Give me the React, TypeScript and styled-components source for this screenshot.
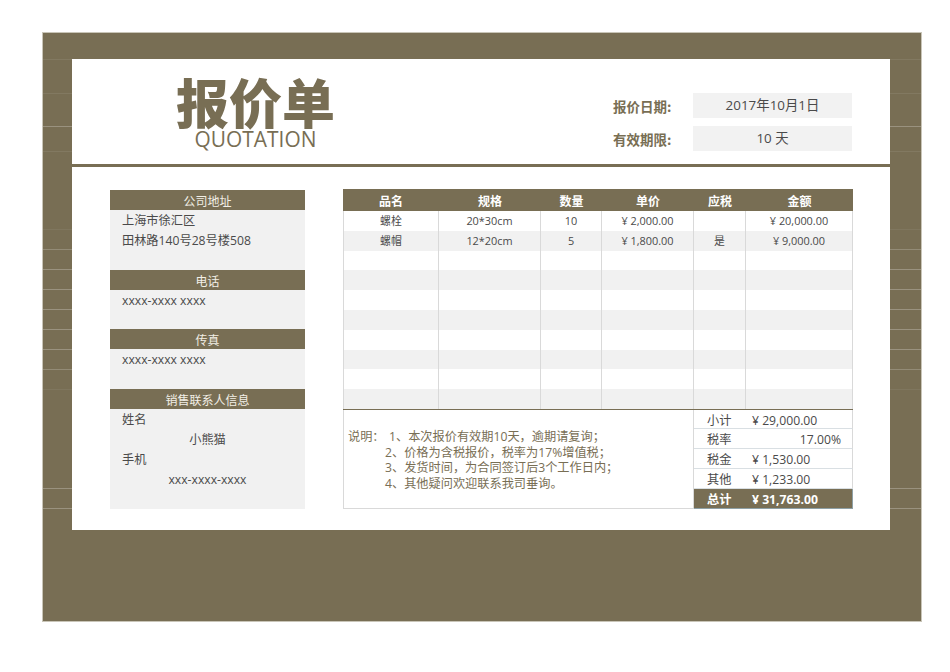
import React from "react";
import styled, { createGlobalStyle } from "styled-components";

const Global = createGlobalStyle`
  html, body { margin: 0; padding: 0; background: #fff; }
  body { font-family: "Open Sans", "Noto Sans CJK SC", sans-serif; color: #4a4a4a; }
`;

const BROWN = "#786e54";

const Page = styled.div`
  width: 950px; height: 672px; padding: 32px 0 0 42px; box-sizing: border-box;
`;
const Frame = styled.div`
  width: 880px; height: 590px; box-sizing: border-box; background: ${BROWN};
  border: 1px solid #c9c5b8;
  display: grid; grid-template-columns: 29px 818px 31px; grid-template-rows: 26px 471px 91px;
`;
const TopBand = styled.div`grid-column: 1 / 4;`;
const BottomBand = styled.div`grid-column: 1 / 4;`;
const Gutter = styled.div`display: flex; flex-direction: column;`;
const GutterCell = styled.div<{ $h: number; $o: number }>`
  height: ${p => p.$h}px; flex: none; box-sizing: border-box;
  border-top: 1px solid rgba(255, 255, 255, ${p => p.$o});
`;
const Sheet = styled.div`background: #fff; display: flex; flex-direction: column;`;

const Head = styled.header`
  height: 105px; flex: none; border-bottom: 3px solid ${BROWN}; box-sizing: content-box;
  display: flex; justify-content: space-between;
`;
const Brand = styled.div`
  width: 367px; display: flex; flex-direction: column; align-items: center; padding-top: 18px;
  box-sizing: border-box;
`;
const BrandCn = styled.div`
  font: 900 53px/48px "Noto Sans CJK SC", sans-serif; color: ${BROWN};
`;
const BrandEn = styled.div`
  font: 400 20.9px/22px "Open Sans", sans-serif; color: ${BROWN}; margin-top: 3px;
`;
const Meta = styled.div`
  width: 239px; margin-right: 38px; padding-top: 34px; display: flex; flex-direction: column; gap: 8px; box-sizing: border-box;
`;
const MetaRow = styled.div`display: flex; align-items: center; justify-content: space-between; height: 25px;`;
const MetaLabel = styled.div`font: 700 13.5px/24px "Noto Sans CJK SC", sans-serif; color: ${BROWN};`;
const MetaValue = styled.div`
  width: 159px; height: 25px; background: #f2f2f2; text-align: center;
  font: 400 13.4px/25px "Open Sans", "Noto Sans CJK SC", sans-serif; color: #4a4a4a;
`;

const Body = styled.div`display: flex; padding: 22px 37px 0 38px; align-items: flex-start;`;

const Side = styled.aside`width: 195px; margin-top: 1px; background: #f1f1f1; flex: none; margin-right: 38px;`;
const SideHead = styled.div`
  height: 20px; background: ${BROWN}; color: #f2efe6; text-align: center;
  font: 400 12px/21px "Noto Sans CJK SC", sans-serif;
`;
const SideLine = styled.div<{ $center?: boolean }>`
  height: 20px; padding-left: ${p => (p.$center ? 0 : 12)}px; text-align: ${p => (p.$center ? "center" : "left")};
  font: 400 12.2px/21px "Open Sans", "Noto Sans CJK SC", sans-serif; color: #4a4a4a;
`;
const SideRest = styled.div<{ $h: number }>`height: ${p => p.$h}px;`;

const Main = styled.section`width: 510px; flex: none;`;
const Grid = styled.div`
  display: grid; grid-template-columns: 96px 102px 61px 92px 52px 107px;
`;
const Th = styled.div`
  height: 22px; background: ${BROWN}; color: #fff; text-align: center;
  font: 700 12px/23px "Noto Sans CJK SC", sans-serif;
`;
const Td = styled.div<{ $odd: boolean; $first?: boolean }>`
  height: 19.8px; box-sizing: border-box; text-align: center; background: ${p => (p.$odd ? "#f1f1f1" : "#fff")};
  border-right: 1px solid #d9d9d9;
  border-left: ${p => (p.$first ? "1px solid #d9d9d9" : "0")};
  font: 400 10.9px/19px "Open Sans", "Noto Sans CJK SC", sans-serif; color: #4a4a4a;
`;
const Foot = styled.div`
  display: flex; height: 101px; box-sizing: border-box; border-top: 2px solid ${BROWN}; margin-top: -1px;
`;
const Notes = styled.div`
  width: 350px; flex: none; padding: 19px 0 0 4px; box-sizing: border-box;
  border-left: 1px solid #d9d9d9; border-bottom: 1px solid #d9d9d9;
  font: 400 12.2px/15.6px "Open Sans", "Noto Sans CJK SC", sans-serif; color: ${BROWN};
`;
const Note = styled.div<{ $indent: number }>`padding-left: ${p => p.$indent}px; white-space: nowrap;`;
const NoteLead = styled.span`display: inline-block; width: 41px;`;
const Totals = styled.div`flex: 1; display: flex; flex-direction: column; border-left: 1px solid #d9d9d9;`;
const TotalRow = styled.div<{ $strong?: boolean; $h: number }>`
  height: ${p => p.$h}px; flex: none; display: flex; box-sizing: border-box;
  background: ${p => (p.$strong ? BROWN : "#fff")};
  color: ${p => (p.$strong ? "#fff" : "#4a4a4a")};
  border-bottom: 1px solid ${p => (p.$strong ? "#8ea0a6" : "#d9dfe3")};
  border-right: 1px solid ${p => (p.$strong ? "#8ea0a6" : "#d9d9d9")};
  font: ${p => (p.$strong ? 700 : 400)} 12.2px/21px "Open Sans", "Noto Sans CJK SC", sans-serif;
`;
const TotalLabel = styled.div`width: 51px; padding-left: 13px; box-sizing: border-box; flex: none;`;
const TotalValue = styled.div<{ $right?: boolean }>`
  flex: 1; padding: 0 11px 0 7px; text-align: ${p => (p.$right ? "right" : "left")};
`;

const railCells: [number, number][] = [
  [34, .08], [33, .08], [25, .25], [78, .08],
  [20, .06], [20, .2], [20, .25], [20, .25], [20, .25], [20, .25], [20, .25], [20, .2],
  [99, .06], [20, .25], [22, .25],
];

const rows: string[][] = [
  ["螺栓", "20*30cm", "10", "¥ 2,000.00", "", "¥ 20,000.00"],
  ["螺帽", "12*20cm", "5", "¥ 1,800.00", "是", "¥ 9,000.00"],
  ...Array.from({ length: 8 }, () => ["", "", "", "", "", ""]),
];

const Rail = () => (
  <Gutter>
    {railCells.map(([h, o], i) => <GutterCell key={i} $h={h} $o={o} />)}
  </Gutter>
);

export default function App() {
  return (
    <Page>
      <Global />
      <Frame>
        <TopBand />
        <Rail />
        <Sheet>
          <Head>
            <Brand>
              <BrandCn>报价单</BrandCn>
              <BrandEn>QUOTATION</BrandEn>
            </Brand>
            <Meta>
              <MetaRow><MetaLabel>报价日期:</MetaLabel><MetaValue>2017年10月1日</MetaValue></MetaRow>
              <MetaRow><MetaLabel>有效期限:</MetaLabel><MetaValue>10 天</MetaValue></MetaRow>
            </Meta>
          </Head>
          <Body>
            <Side>
              <SideHead>公司地址</SideHead>
              <SideLine>上海市徐汇区</SideLine>
              <SideLine>田林路140号28号楼508</SideLine>
              <SideRest $h={20} />
              <SideHead>电话</SideHead>
              <SideLine>xxxx-xxxx xxxx</SideLine>
              <SideRest $h={19} />
              <SideHead>传真</SideHead>
              <SideLine>xxxx-xxxx xxxx</SideLine>
              <SideRest $h={20} />
              <SideHead>销售联系人信息</SideHead>
              <SideLine>姓名</SideLine>
              <SideLine $center>小熊猫</SideLine>
              <SideLine>手机</SideLine>
              <SideLine $center>xxx-xxxx-xxxx</SideLine>
              <SideRest $h={20} />
            </Side>
            <Main>
              <Grid>
                {["品名", "规格", "数量", "单价", "应税", "金额"].map(h => <Th key={h}>{h}</Th>)}
                {rows.map((r, i) =>
                  r.map((c, j) => <Td key={`${i}-${j}`} $odd={i % 2 === 1} $first={j === 0}>{c}</Td>)
                )}
              </Grid>
              <Foot>
                <Notes>
                  <Note $indent={0}><NoteLead>说明：</NoteLead>1、本次报价有效期10天，逾期请复询；</Note>
                  <Note $indent={37}>2、价格为含税报价，税率为17%增值税；</Note>
                  <Note $indent={37}>3、发货时间，为合同签订后3个工作日内；</Note>
                  <Note $indent={37}>4、其他疑问欢迎联系我司垂询。</Note>
                </Notes>
                <Totals>
                  <TotalRow $h={19}><TotalLabel>小计</TotalLabel><TotalValue>¥ 29,000.00</TotalValue></TotalRow>
                  <TotalRow $h={20}><TotalLabel>税率</TotalLabel><TotalValue $right>17.00%</TotalValue></TotalRow>
                  <TotalRow $h={20}><TotalLabel>税金</TotalLabel><TotalValue>¥ 1,530.00</TotalValue></TotalRow>
                  <TotalRow $h={20}><TotalLabel>其他</TotalLabel><TotalValue>¥ 1,233.00</TotalValue></TotalRow>
                  <TotalRow $h={20} $strong><TotalLabel>总计</TotalLabel><TotalValue>¥ 31,763.00</TotalValue></TotalRow>
                </Totals>
              </Foot>
            </Main>
          </Body>
        </Sheet>
        <Rail />
        <BottomBand />
      </Frame>
    </Page>
  );
}
